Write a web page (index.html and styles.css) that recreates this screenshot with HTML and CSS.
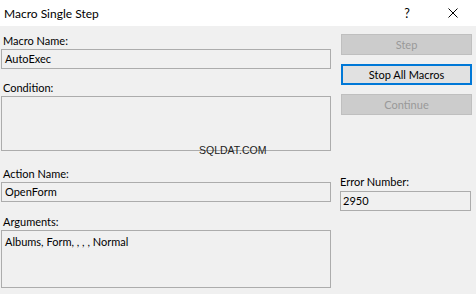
FILE: index.html
```html
<!DOCTYPE html>
<html lang="en">
<head>
    <meta charset="UTF-8">
    <meta name="viewport" content="width=device-width, initial-scale=1.0">
    <title>Macro Single Step</title>
    <link rel="stylesheet" href="styles.css">
</head>
<body>
    <div class="dialog">
        <div class="title-bar">
            <span class="title">Macro Single Step</span>
            <div class="title-buttons">
                <span class="title-btn">?</span>
                <span class="title-btn">
                    <svg width="10" height="10" viewBox="0 0 10 10">
                        <path d="M0.5 0.5 L9.5 9.5 M9.5 0.5 L0.5 9.5" stroke="#000" stroke-width="1" fill="none"/>
                    </svg>
                </span>
            </div>
        </div>

        <div class="dialog-body">
            <div class="left-col">
                <div class="field">
                    <label>Macro Name:</label>
                    <div class="text-box">AutoExec</div>
                </div>
                <div class="field field-condition">
                    <label>Condition:</label>
                    <div class="text-area condition-box">
                        <span class="watermark">SQLDAT.COM</span>
                    </div>
                </div>
                <div class="field field-action">
                    <label>Action Name:</label>
                    <div class="text-box">OpenForm</div>
                </div>
                <div class="field field-args">
                    <label>Arguments:</label>
                    <div class="text-area args-box">Albums, Form, , , , Normal</div>
                </div>
            </div>

            <div class="right-col">
                <button class="win-btn" disabled>Step</button>
                <button class="win-btn default-btn">Stop All Macros</button>
                <button class="win-btn" disabled>Continue</button>

                <div class="field error-field">
                    <label>Error Number:</label>
                    <div class="text-box">2950</div>
                </div>
            </div>
        </div>
    </div>
</body>
</html>
```

FILE: styles.css
```css
* {
    box-sizing: border-box;
    margin: 0;
    padding: 0;
}

body {
    font-family: Lato, 'Noto Sans', sans-serif;
    font-size: 11px;
    color: #000;
    background-color: #f0f0f0;
    width: 476px;
    height: 294px;
    overflow: hidden;
}

.title-bar {
    height: 26px;
    background-color: #fff;
    display: flex;
    align-items: center;
    justify-content: space-between;
}

.title {
    padding-left: 4px;
    font-size: 12px;
}

.title-buttons {
    display: flex;
    height: 100%;
}

.title-btn {
    width: 46px;
    height: 100%;
    display: flex;
    align-items: center;
    justify-content: center;
    font-size: 12.5px;
}

.dialog-body {
    display: flex;
    gap: 9px;
    padding: 7px 4px 0 1px;
}

.left-col {
    width: 330px;
    display: flex;
    flex-direction: column;
}

.right-col {
    width: 132px;
    padding-top: 1px;
    display: flex;
    flex-direction: column;
    gap: 9px;
}

.field label {
    display: block;
    line-height: 15px;
    padding-left: 2px;
    margin-bottom: 1px;
}

.field-condition {
    margin-top: 11px;
}

.field-action {
    margin-top: 15px;
}

.field-args {
    margin-top: 12px;
}

.text-box {
    height: 20px;
    border: 1px solid #acacac;
    background-color: #f0f0f0;
    padding: 0 3px;
    line-height: 18px;
}

.text-area {
    border: 1px solid #acacac;
    background-color: #f0f0f0;
    padding: 3px 3px;
    line-height: 15px;
}

.condition-box {
    height: 55px;
    position: relative;
}

.args-box {
    height: 58px;
}

.watermark {
    position: absolute;
    left: 197px;
    top: 47px;
    font-family: 'Liberation Sans', Arial, sans-serif;
    font-size: 10.5px;
    line-height: 12px;
    color: #222;
}

.win-btn {
    margin-left: 1px;
    height: 21px;
    font-family: inherit;
    font-size: 11px;
    background-color: #e1e1e1;
    border: 1px solid #adadad;
    color: #000;
}

.win-btn:disabled {
    background-color: #cccccc;
    border-color: #bfbfbf;
    color: #999;
}

.default-btn {
    border: 2px solid #0078d7;
}

.error-field {
    margin-top: 50px;
}

.error-field label {
    margin-bottom: 2px;
    padding-left: 0;
}

.error-field .text-box {
    width: 131px;
    padding-left: 2px;
}
```
